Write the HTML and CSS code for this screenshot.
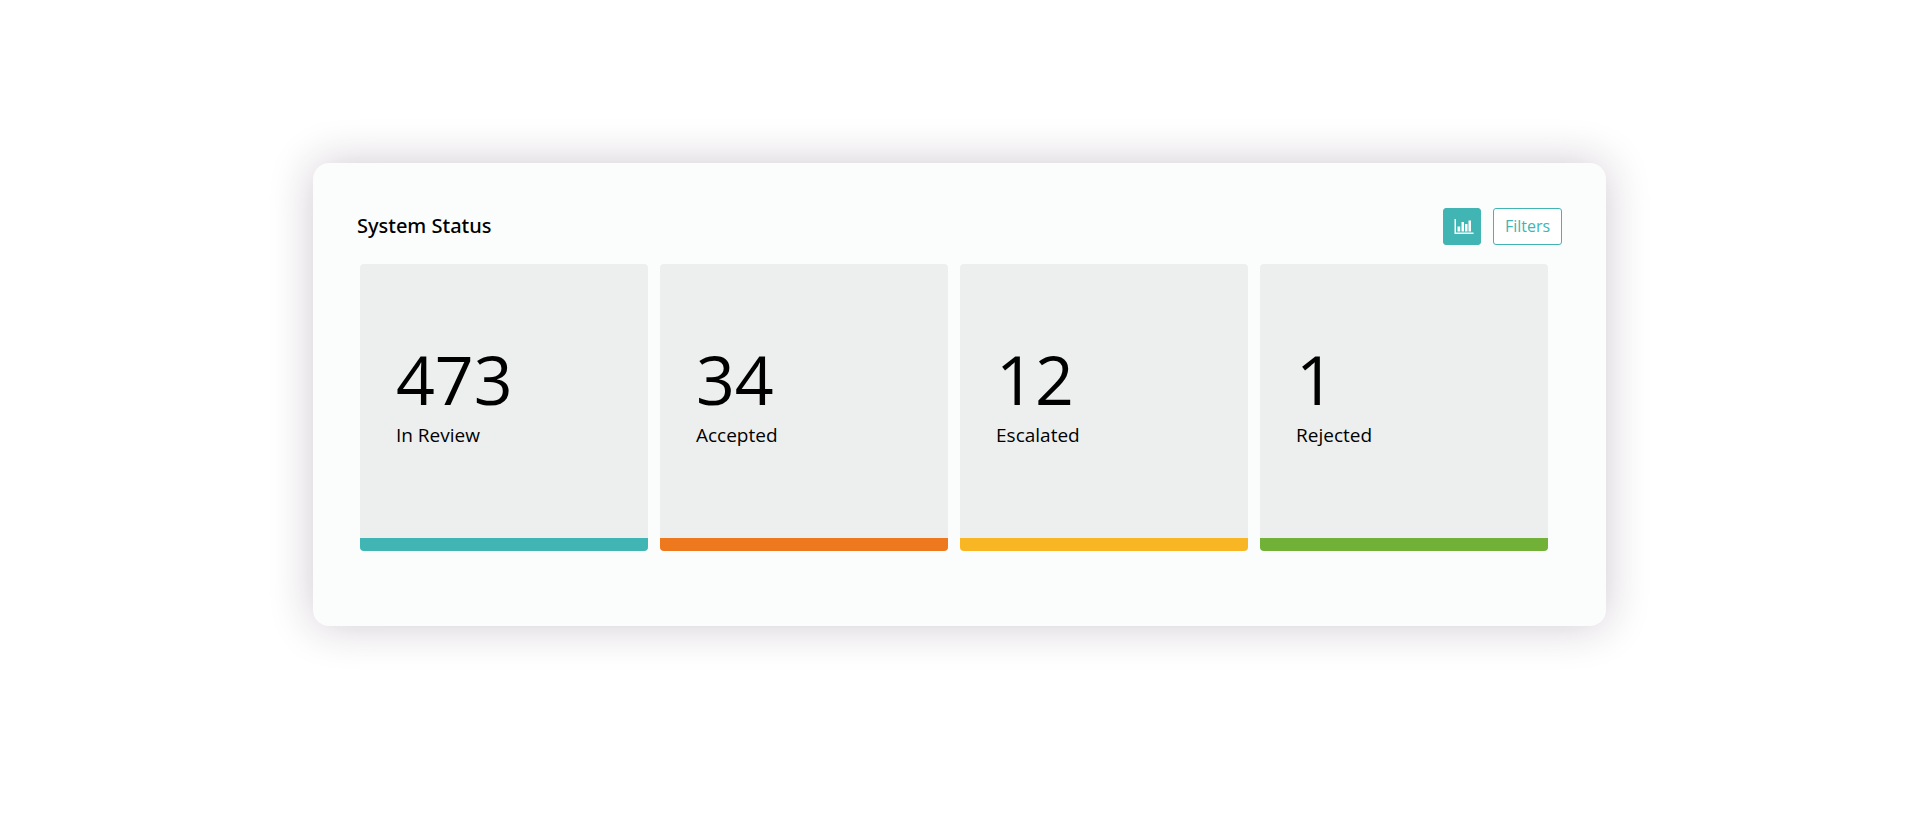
FILE: index.html
```html
<!DOCTYPE html>
<html lang="en">
<head>
<meta charset="utf-8">
<meta name="viewport" content="width=device-width, initial-scale=1">
<title>System Status</title>
<link rel="stylesheet" href="styles.css">
</head>
<body>
<main class="panel">
  <header class="panel-header">
    <h1 class="panel-title">System Status</h1>
    <div class="actions">
      <button class="btn btn-solid" type="button" aria-label="Chart view">
        <svg class="icon" viewBox="0 0 20 16" width="20" height="16" aria-hidden="true">
          <path fill="currentColor" d="M0.500 0h1.500v13.500H19.500V15H0.500zM3.500 7.500h2.700V12.500H3.500zM7.500 3h2.500v9.500h-2.500zM11 5h2.500v7.500h-2.500zM14.500 1.500h2.500v11h-2.500z"/>
        </svg>
      </button>
      <button class="btn btn-outline" type="button">Filters</button>
    </div>
  </header>
  <section class="cards">
    <article class="card card-teal"><p class="count">473</p><p class="label">In Review</p></article>
    <article class="card card-orange"><p class="count">34</p><p class="label">Accepted</p></article>
    <article class="card card-yellow"><p class="count">12</p><p class="label">Escalated</p></article>
    <article class="card card-green"><p class="count">1</p><p class="label">Rejected</p></article>
  </section>
</main>
</body>
</html>
```
FILE: styles.css
```css
* { box-sizing: border-box; }
body {
  margin: 0;
  padding: 163px 16.350% 163px 16.300%;
  background: #fff;
  color: #000;
  font-family: "Open Sans", "Noto Sans", sans-serif;
}
.panel {
  padding: 45px 44px 75px;
  border-radius: 16px;
  background: #fbfdfc;
  box-shadow: 0 0 44px rgba(60, 30, 60, 0.24);
}
.panel-header {
  display: flex;
  align-items: flex-start;
  justify-content: space-between;
}
.panel-title {
  margin: 0;
  font-family: "Noto Sans", "Open Sans", sans-serif;
  font-size: 20px;
  line-height: 36px;
  font-weight: 500;
}
.actions { display: flex; gap: 12px; }
.btn {
  display: flex;
  align-items: center;
  justify-content: center;
  height: 37px;
  border: 1px solid #40b5b3;
  border-radius: 3px;
  font: 400 16px/24px "Open Sans", "Noto Sans", sans-serif;
  cursor: pointer;
}
.btn-solid { width: 38px; padding: 0 0 0 4px; background: #40b5b3; color: #fff; }
.btn-outline { padding: 0 11px 2px; background: #fff; color: #40b5b3; }
.cards {
  display: grid;
  grid-template-columns: repeat(4, 1fr);
  gap: 12px;
  margin: 19px 14px 0 3px;
}
.card {
  height: 287px;
  padding: 69px 36px 0;
  border-bottom: 13px solid;
  border-radius: 4px;
  background: #edefee;
}
.card-teal { border-color: #40b5b3; }
.card-orange { border-color: #ee781d; }
.card-yellow { border-color: #f9b624; }
.card-green { border-color: #72b138; }
.count { margin: 0; font-size: 68px; line-height: 92px; }
.label { margin: 0; font-size: 19px; line-height: 20px; font-weight: 375; }
```
